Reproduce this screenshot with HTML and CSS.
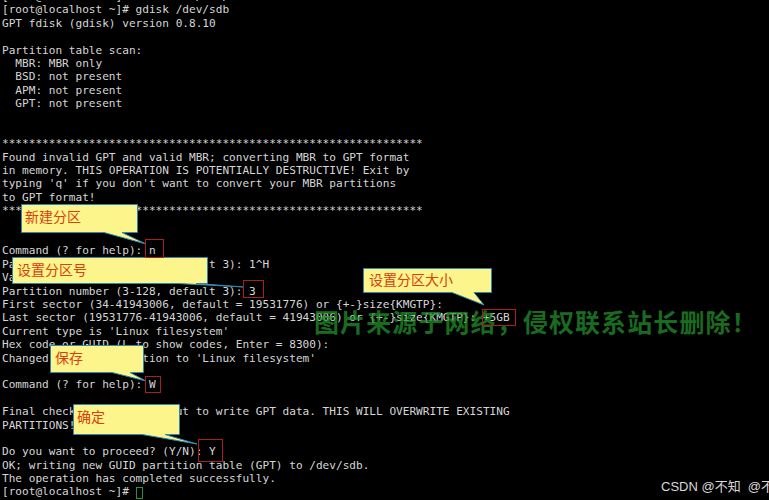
FILE: index.html
```html
<!DOCTYPE html>
<html lang="zh-CN">
<head>
<meta charset="utf-8">
<title>gdisk</title>
<link rel="stylesheet" href="styles.css">
</head>
<body>
<div class="screen">
<pre class="term">[root@localhost ~]# fdisk -l /dev/sdb
[root@localhost ~]# gdisk /dev/sdb
GPT fdisk (gdisk) version 0.8.10

Partition table scan:
  MBR: MBR only
  BSD: not present
  APM: not present
  GPT: not present


***************************************************************
Found invalid GPT and valid MBR; converting MBR to GPT format
in memory. THIS OPERATION IS POTENTIALLY DESTRUCTIVE! Exit by
typing 'q' if you don't want to convert your MBR partitions
to GPT format!
***************************************************************


Command (? for help): n
Partition number (3-128, default 3): 1^H
Value out of range
Partition number (3-128, default 3): 3
First sector (34-41943006, default = 19531776) or {+-}size{KMGTP}:
Last sector (19531776-41943006, default = 41943006) or {+-}size{KMGTP}: +5GB
Current type is 'Linux filesystem'
Hex code or GUID (L to show codes, Enter = 8300):
Changed type of partition to 'Linux filesystem'

Command (? for help): W

Final checks complete. About to write GPT data. THIS WILL OVERWRITE EXISTING
PARTITIONS!!

Do you want to proceed? (Y/N): Y
OK; writing new GUID partition table (GPT) to /dev/sdb.
The operation has completed successfully.
[root@localhost ~]# <span class="cursor"> </span></pre>

<div class="watermark">图片来源于网络，侵权联系站长删除！</div>

<svg class="overlay" width="769" height="500" viewBox="0 0 769 500">
  <g class="callout">
    <path d="M21.5,204.5 H137.5 V232.5 H122 L146,244 L104,232.5 H21.5 Z"/>
    <path d="M12.5,257.5 H207.5 V283.5 H196 L244,287 L178,283.5 H12.5 Z"/>
    <path d="M363.5,268.5 H491.5 V292.5 H474 L484,305 L452,292.5 H363.5 Z"/>
    <path d="M50.5,345.5 H143.5 V372.5 H130 L146,381 L112,372.5 H50.5 Z"/>
    <path d="M73.5,404.5 H179.5 V434.5 H165 L197,444 L142,434.5 H73.5 Z"/>
  </g>
  <g class="mark">
    <rect x="145.5" y="239.5" width="18" height="18"/>
    <rect x="243.5" y="280.5" width="20" height="17"/>
    <rect x="482.5" y="309.5" width="33" height="16"/>
    <rect x="145.5" y="376.5" width="15" height="16"/>
    <rect x="198.5" y="439.5" width="24" height="22"/>
  </g>
</svg>

<span class="label l1">新建分区</span>
<span class="label l2">设置分区号</span>
<span class="label l3">设置分区大小</span>
<span class="label l4">保存</span>
<span class="label l5">确定</span>

<div class="csdn">CSDN @不知&nbsp;&nbsp;@不知道</div>
</div>
</body>
</html>
```

FILE: styles.css
```css
html, body {
  margin: 0;
  padding: 0;
  background: #000;
  overflow: hidden;
}

.screen {
  position: relative;
  width: 769px;
  height: 500px;
  overflow: hidden;
  background: #000;
}

.term {
  margin: -10px 0 0 0;
  padding: 0 0 0 2px;
  font-family: "DejaVu Sans Mono", monospace;
  font-size: 11.1px;
  line-height: 13.39px;
  color: #d6d6d6;
  white-space: pre;
}

.cursor {
  display: inline-block;
  width: 7px;
  height: 12px;
  border: 1px solid #2f8f3a;
  vertical-align: -3px;
  box-sizing: border-box;
}

.watermark {
  position: absolute;
  left: 314px;
  top: 305px;
  font-family: "Noto Sans CJK SC", sans-serif;
  font-weight: 700;
  font-size: 25px;
  line-height: 32px;
  letter-spacing: 1.1px;
  color: rgba(34, 150, 44, 0.72);
  white-space: nowrap;
}

.overlay {
  position: absolute;
  left: 0;
  top: 0;
}

.callout path {
  fill: #fbf58c;
  stroke: #2f86b0;
  stroke-width: 1;
  stroke-linejoin: miter;
}

.mark rect {
  fill: none;
  stroke: #a8201c;
  stroke-width: 1;
}

.label {
  position: absolute;
  font-family: "Noto Sans CJK SC", sans-serif;
  font-size: 14px;
  line-height: 16px;
  color: #d9400f;
  white-space: nowrap;
}

.l1 { left: 25px; top: 208px; }
.l2 { left: 17px; top: 261px; }
.l3 { left: 369px; top: 271px; }
.l4 { left: 55px; top: 349px; }
.l5 { left: 77px; top: 408px; }

.csdn {
  position: absolute;
  left: 661px;
  top: 479px;
  font-family: "Liberation Sans", Arial, "Noto Sans CJK SC", sans-serif;
  font-size: 13px;
  line-height: 16px;
  color: #d8d8d8;
  white-space: nowrap;
}
```
